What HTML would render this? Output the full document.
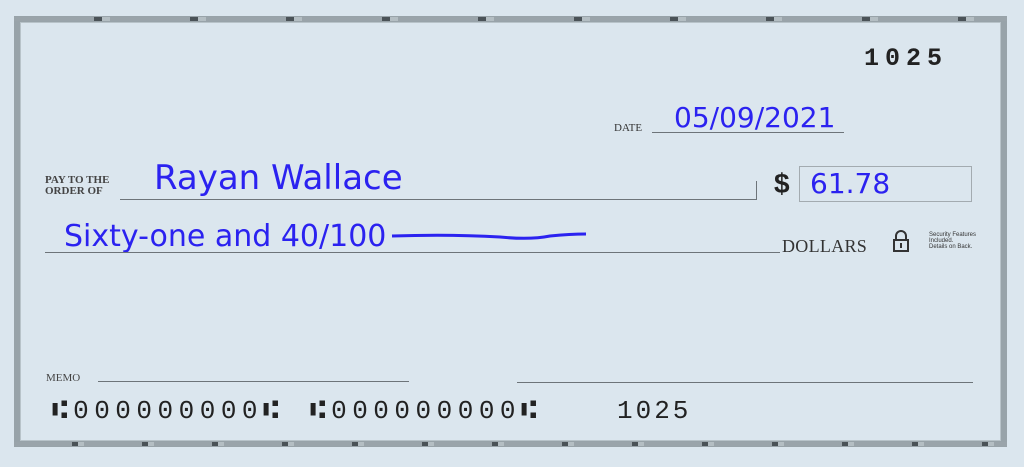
<!DOCTYPE html>
<html><head><meta charset="utf-8"><style>
html,body{margin:0;padding:0}
body{width:1024px;height:467px;background:#dbe6ee;position:relative;overflow:hidden;font-family:"Liberation Serif",serif}
.abs{position:absolute}
.border{left:14px;top:16px;width:993px;height:431px;box-sizing:border-box;border:6px solid #98a3a9;}
.bin{left:20px;top:22px;width:981px;height:419px;box-sizing:border-box;border:1px solid #b8c3c9;}
.line{position:absolute;height:1px;background:#6d7479}
.hw{color:#2b22f0;font-family:"DejaVu Sans","Liberation Sans",sans-serif;position:absolute;white-space:nowrap}
.sm{font-size:11px;color:#333;position:absolute;line-height:11px}
.mono{font-family:"Liberation Mono",monospace;color:#222;position:absolute;white-space:nowrap}
</style></head><body>
<div class="abs border"></div>
<div class="abs bin"></div>
<div class="abs" style="left:14px;top:17px;width:993px;height:4px;background:repeating-linear-gradient(90deg,#9aa4aa 0 80px,#4a5257 80px 88px,#b4bec3 88px 96px)"></div>
<div class="abs" style="left:14px;top:442px;width:993px;height:4px;background:repeating-linear-gradient(90deg,#9aa4aa 0 58px,#4a5257 58px 64px,#b4bec3 64px 70px)"></div>

<div class="mono" style="left:864px;top:44px;font-size:25px;font-weight:bold;letter-spacing:6px">1025</div>

<div class="sm" style="left:614px;top:123px;font-size:11px">DATE</div>
<div class="line" style="left:652px;top:132px;width:192px"></div>
<div class="hw" style="left:674px;top:101px;font-size:28px">05/09/2021</div>

<div class="sm" style="left:45px;top:175px;font-size:11px;font-weight:bold;color:#444">PAY TO THE<br>ORDER OF</div>
<div class="line" style="left:120px;top:199px;width:637px"></div>
<div class="line" style="left:756px;top:181px;width:1px;height:19px"></div>
<div class="hw" style="left:154px;top:158px;font-size:34px">Rayan Wallace</div>

<div class="abs" style="left:774px;top:168px;font-size:28px;font-weight:bold;font-family:'Liberation Sans',sans-serif;color:#222">$</div>
<div class="abs" style="left:799px;top:166px;width:173px;height:36px;border:1px solid #a3abb0;box-sizing:border-box"></div>
<div class="hw" style="left:810px;top:167px;font-size:28px">61.78</div>

<div class="hw" style="left:64px;top:219px;font-size:30px">Sixty-one and 40/100</div>
<svg class="abs" style="left:390px;top:228px" width="200" height="14"><path d="M2 8 Q60 6 110 9 Q140 12 160 8 Q180 6 196 6" stroke="#2b22f0" stroke-width="3" fill="none"/></svg>
<div class="line" style="left:45px;top:252px;width:735px"></div>
<div class="abs" style="left:782px;top:236px;font-size:18px;color:#333;letter-spacing:0.3px">DOLLARS</div>
<svg class="abs" style="left:891px;top:229px" width="20" height="24"><path d="M5 11 V7 a5 5 0 0 1 10 0 V11" stroke="#333" stroke-width="2" fill="none"/><rect x="3" y="11" width="14" height="11" stroke="#333" stroke-width="2" fill="none"/><rect x="9" y="14" width="2" height="5" fill="#333"/></svg>
<div class="abs" style="left:929px;top:232px;font-size:6px;line-height:6px;font-family:'Liberation Sans',sans-serif;color:#333">Security Features<br>Included.<br>Details on Back.</div>

<div class="sm" style="left:46px;top:373px;font-size:11px;color:#444">MEMO</div>
<div class="line" style="left:98px;top:381px;width:311px"></div>
<div class="line" style="left:517px;top:382px;width:456px"></div>

<div class="mono" style="left:52px;top:396px;font-size:26px;color:#222;letter-spacing:5.5px">⑆000000000⑆</div>
<div class="mono" style="left:310px;top:396px;font-size:26px;color:#222;letter-spacing:5.5px">⑆000000000⑆</div>
<div class="mono" style="left:617px;top:396px;font-size:26px;color:#222;letter-spacing:3px">1025</div>
</body></html>
